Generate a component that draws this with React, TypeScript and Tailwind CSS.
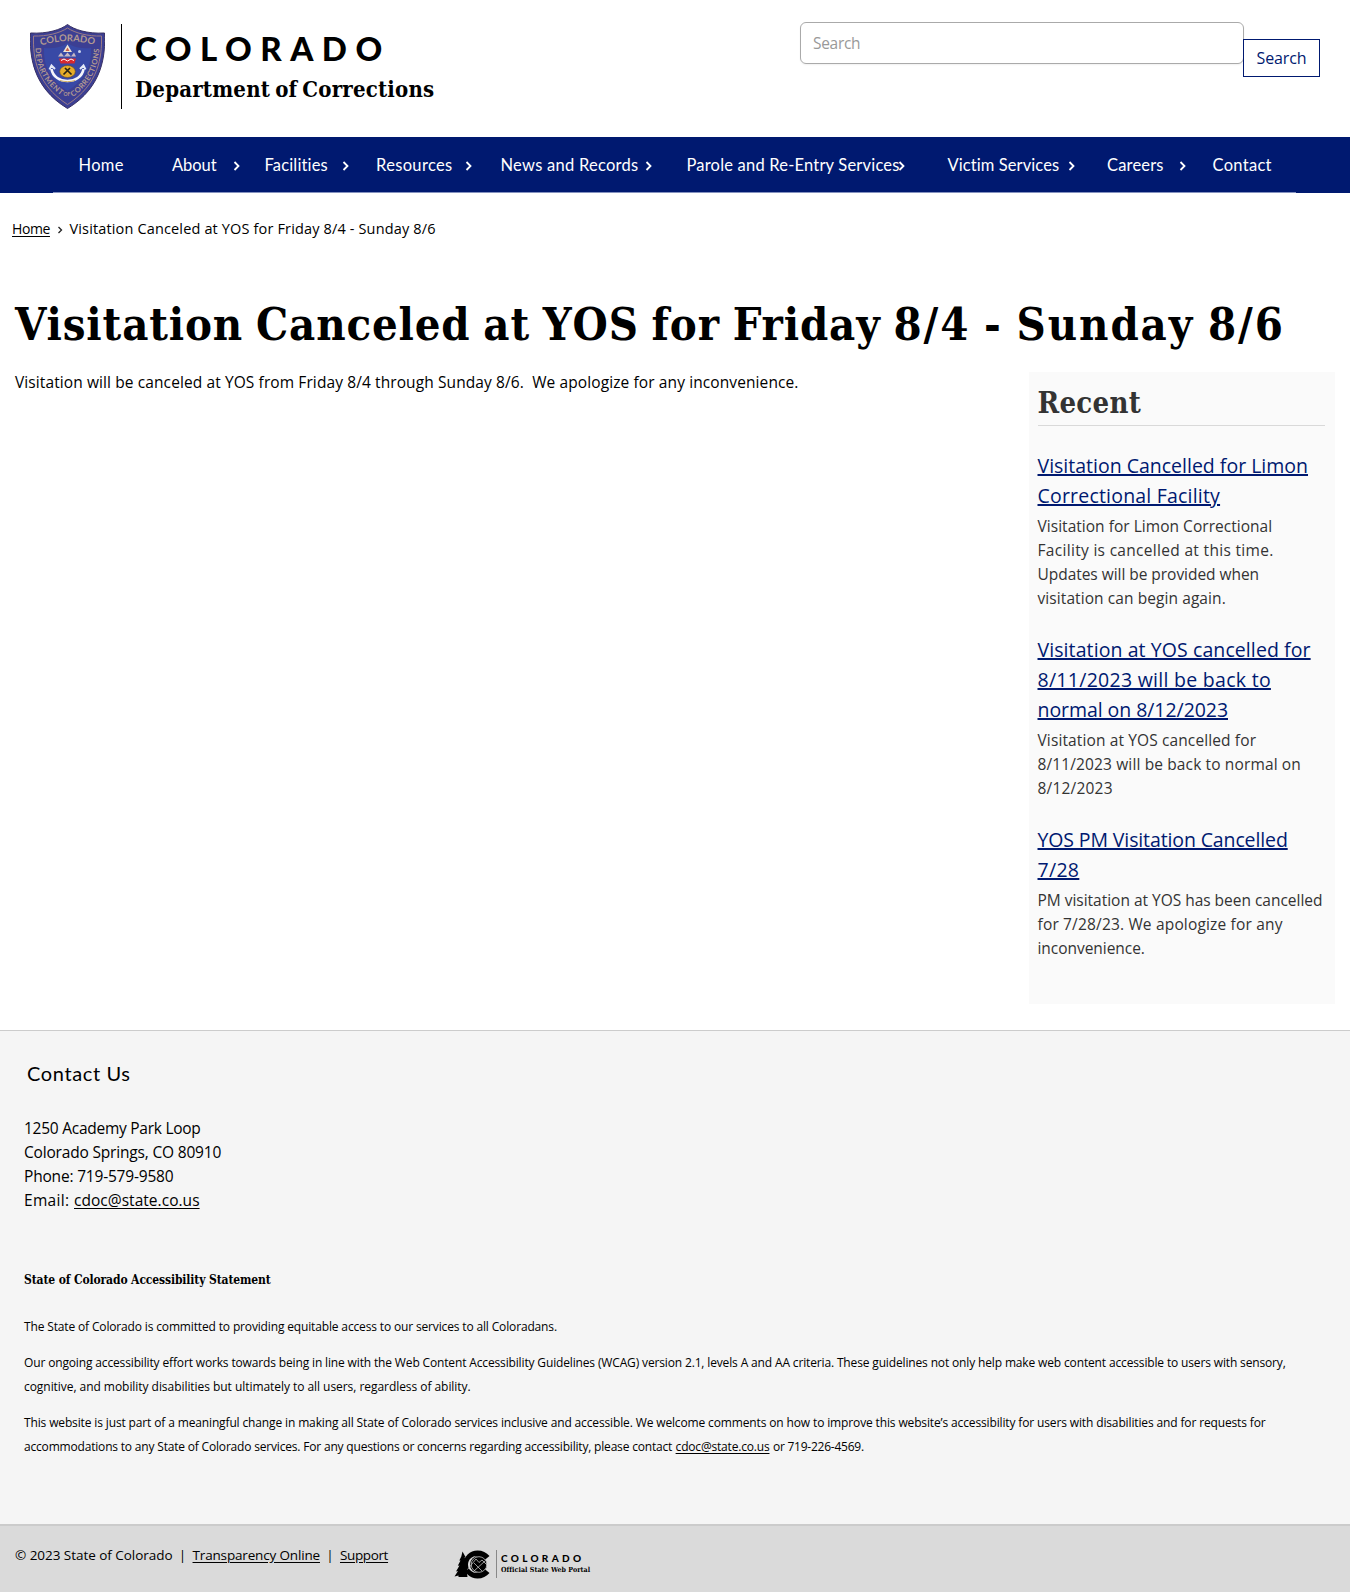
const NAV = [
  { label: "Home", box: "w-[93.5px]", track: "tracking-[0.3px]" },
  { label: "About", box: "w-[92.5px]", track: "tracking-[-0.07px]", arrow: "mr-6" },
  { label: "Facilities", box: "w-[111.5px]", track: "tracking-[0.16px]", arrow: "mr-[26px]" },
  { label: "Resources", box: "w-[124.5px]", track: "tracking-[0.34px]", arrow: "mr-7" },
  { label: "News and Records", box: "w-[186px]", track: "tracking-[0.26px]", arrow: "mr-[34px]" },
  { label: "Parole and Re-Entry Services", box: "w-[261px]", track: "tracking-[0.2px]", arrow: "mr-[42px]" },
  { label: "Victim Services", box: "w-[159.5px]", track: "tracking-[0.09px]", arrow: "mr-[31px]" },
  { label: "Careers", box: "w-[105.5px]", track: "tracking-[0.17px]", arrow: "mr-[26px]" },
  { label: "Contact", box: "w-[80px]", track: "tracking-[0.3px]" },
];

type Line = [text: string, tracking: string];

const RECENT: { title: Line[]; body: Line[] }[] = [
  {
    title: [
      ["Visitation Cancelled for Limon", "tracking-[0px]"],
      ["Correctional Facility", "tracking-[0.2px]"],
    ],
    body: [
      ["Visitation for Limon Correctional", "tracking-[0.03px]"],
      ["Facility is cancelled at this time.", "tracking-[0.31px]"],
      ["Updates will be provided when", "tracking-[-0.04px]"],
      ["visitation can begin again.", "tracking-[0.08px]"],
    ],
  },
  {
    title: [
      ["Visitation at YOS cancelled for", "tracking-[0.09px]"],
      ["8/11/2023 will be back to", "tracking-[0.28px]"],
      ["normal on 8/12/2023", "tracking-[-0.06px]"],
    ],
    body: [
      ["Visitation at YOS cancelled for", "tracking-[0.12px]"],
      ["8/11/2023 will be back to normal on", "tracking-[0.13px]"],
      ["8/12/2023", "tracking-[0.2px]"],
    ],
  },
  {
    title: [
      ["YOS PM Visitation Cancelled", "tracking-[-0.12px]"],
      ["7/28", "tracking-[0.3px]"],
    ],
    body: [
      ["PM visitation at YOS has been cancelled", "tracking-[-0.02px]"],
      ["for 7/28/23. We apologize for any", "tracking-[0.17px]"],
      ["inconvenience.", "tracking-[-0.04px]"],
    ],
  },
];

function Chevron({ className }: { className: string }) {
  return (
    <svg className={`shrink-0 ${className}`} width="8" height="10" viewBox="0 0 8 10" fill="none" stroke="currentColor" strokeWidth="1.8">
      <path d="M1.500 1 5.500 5 1.500 9" />
    </svg>
  );
}

function Lines({ lines }: { lines: Line[] }) {
  return (
    <>
      {lines.map(([text, tracking]) => (
        <span key={text} className={`block whitespace-nowrap ${tracking}`}>
          {text}
        </span>
      ))}
    </>
  );
}

function Badge() {
  return (
    <svg width="75" height="85" viewBox="0 0 75 85" className="shrink-0">
      <defs>
        <path id="arc-top" d="M11 21.500 Q37.500 13 66 21.500" />
        <path id="arc-left" d="M5.500 24 C6 46 15 60 33 73" />
        <path id="arc-right" d="M43 73 C60 60 68.500 46 69.500 22" />
      </defs>
      <path d="M37.500 .5C44 5.500 57 10 74.500 9C75.500 31 73 63 37.500 84.500C2 63-.5 31 .5 9C18 10 31 5.500 37.500.5Z" fill="#3c3f93" stroke="#383063" />
      <path d="M37.500 4C45 9 58 12.500 71.500 12C72 33 69 60 37.500 80.500C6 60 3 33 3.500 12C17 12.500 30 9 37.500 4Z" fill="none" stroke="#9b7c86" strokeWidth="1" />
      <path d="M14 24C27 25 33 22 37.500 19C42 22 48 25 61 24C62 42 54 57 37.500 67C21 57 13 42 14 24Z" fill="#3849a6" />
      <g fill="#b39a91" fontFamily="Lato" fontWeight="700">
        <text fontSize="9.500" textLength="54"><textPath href="#arc-top">COLORADO</textPath></text>
        <text fontSize="7.500" textLength="56"><textPath href="#arc-left">DEPARTMENT</textPath></text>
        <text fontSize="7.500" textLength="57"><textPath href="#arc-right">CORRECTIONS</textPath></text>
        <text fontSize="5" x="33.500" y="72">OF</text>
      </g>
      <path d="M37.500 20.500 42 28H33Z" fill="#efe6d6" />
      <path d="M37.500 23.500 39.500 27H35.500Z" fill="#c9604c" />
      <path d="M28 32.500 31 28.500 34 32.500 37.500 28.500 41 32.500 44 28.500 46 32.500Z" fill="#c6b9c4" />
      <circle cx="49.500" cy="27.500" r="1.500" fill="#c8d4ee" />
      <path d="M29 34.500H46L44.500 39.500H30.500Z" fill="#d7292f" />
      <path d="M31 36.500 34 35 37.500 37 41 35 44 36.500" stroke="#fff" fill="none" />
      <ellipse cx="37.500" cy="47.500" rx="7.800" ry="6" fill="#e6ad2b" stroke="#6b4e1e" strokeWidth=".6" />
      <path d="M33.500 50.500 40 44M41.500 50.500 35 44" stroke="#2a2415" strokeWidth="1.700" />
      <path d="M21.500 45C24 61 51 61 53.500 45" fill="none" stroke="#f5f5fa" strokeWidth="2.600" />
      <path d="M19.500 45.500 21.500 41.500 25 45M50 45 53.500 41.500 55.500 45.500" fill="none" stroke="#e4e9f7" strokeWidth="2" />
      <path d="M30 56.500C35 58 40 58 45 56.500" fill="none" stroke="#c8a13f" strokeWidth=".8" />
    </svg>
  );
}

function PortalMark() {
  return (
    <svg width="38" height="29" viewBox="0 0 38 29" className="shrink-0">
      <path d="M8.500 1.500 11.500 7 10.500 7.500 13 12 11.500 12.500 13.500 27H4.500V25.500L.5 26.500 4 21 2 21.500 5.500 15.500 3.800 15.800 6.500 10.500 5.300 10.500 7.300 6.500Z" />
      <path d="M23.500 .5C28.500 .5 32.500 2.500 35.500 6L30 10.500A8.500 8.500 0 1 0 30 18.500L35.500 23C32.500 26.500 28.500 28.500 23.500 28.500A14 14 0 1 1 23.500 .5Z" />
      <circle cx="24.500" cy="14.500" r="8.500" />
      <circle cx="25" cy="14.500" r="7.800" fill="none" stroke="#dadada" strokeWidth=".7" />
      <path d="M13.500 19.500 22 9 25 12.500 28 10 33 15M20 13 28 21M31 11 20 21" fill="none" stroke="#dadada" strokeWidth=".7" />
    </svg>
  );
}

export default function App() {
  return (
    <div className="flex h-[1592px] w-full flex-col overflow-hidden bg-white font-['Open_Sans',sans-serif] text-black">
      <header className="flex h-[137px] shrink-0 items-start justify-between pl-[30px] pr-[30px]">
        <div className="flex pt-6">
          <Badge />
          <div className="ml-4 h-[85px] w-px bg-black" />
          <div className="ml-[13px] pt-1 whitespace-nowrap">
            <div className="h-[46px] font-['Lato',sans-serif] text-[33px] leading-10 font-black tracking-[8.5px]">COLORADO</div>
            <div className="font-['DejaVu_Serif_Condensed','DejaVu_Serif',serif] text-[22px] leading-[30px] font-bold tracking-[0.2px] [word-spacing:-2px]">Department of Corrections</div>
          </div>
        </div>
        <div className="flex pt-[22px]">
          <div className="h-[42px] w-[444px] rounded-md border border-[#aaa] pt-2 pl-3 text-[15.5px] leading-6 tracking-[-0.3px] text-[#999] shadow-[0_1px_2px_rgba(0,0,0,0.06)]">Search</div>
          <button className="-ml-px mt-[17px] h-[38px] w-[77px] border border-[#001970] bg-white text-base leading-6 tracking-[-0.12px] text-[#001970]">Search</button>
        </div>
      </header>

      <nav className="h-14 shrink-0 bg-[#001970] text-white">
        <ul className="ml-[53px] mr-[54px] flex h-14 items-center border-b border-[#8592bf] pt-[2px] pl-[25.5px] font-['Lato',sans-serif] text-[16.5px]">
          {NAV.map((item) => (
            <li key={item.label} className={`flex shrink-0 items-center ${item.box}`}>
              <span className={`w-0 flex-1 whitespace-nowrap ${item.track}`}>{item.label}</span>
              {item.arrow && <Chevron className={item.arrow} />}
            </li>
          ))}
        </ul>
      </nav>

      <div className="mt-6 flex h-6 shrink-0 items-center pl-3 leading-6 whitespace-nowrap">
        <a className="text-sm leading-6 tracking-[-0.4px] underline underline-offset-2">Home</a>
        <svg className="ml-[7px] mt-[2px]" width="6" height="8" viewBox="0 0 6 8" fill="none" stroke="#222" strokeWidth="1.300"><path d="M1.500 1 4.500 4 1.500 7" /></svg>
        <span className="ml-[6.5px] text-[14.5px] tracking-[0.15px]">Visitation Canceled at YOS for Friday 8/4 - Sunday 8/6</span>
      </div>

      <main className="h-[789px] shrink-0 pt-[55px] pr-[15px] pl-[15px]">
        <h1 className="font-['DejaVu_Serif_Condensed','DejaVu_Serif',serif] text-[45px] leading-[58px] font-bold [word-spacing:-2.1px] whitespace-nowrap">
          <span className="tracking-[0.85px]">Visitation Canceled at YOS for Friday </span>
          <span className="tracking-[1.88px]">8/4 - Sunday 8/6</span>
        </h1>
        <div className="mt-4 flex items-start justify-between">
          <p className="text-[15.5px] leading-6 tracking-[0.1px] whitespace-nowrap">
            Visitation will be canceled at YOS from Friday 8/4 through Sunday 8/6.{"\u00a0 "}We apologize for any inconvenience.
          </p>
          <aside className="mt-[2px] h-[632px] w-[306px] bg-[#fafafa] pr-[10px] pl-[8.5px] pt-[13px] text-[#333]">
            <h2 className="h-[41px] border-b border-[#d9d9d9] font-['DejaVu_Serif_Condensed','DejaVu_Serif',serif] text-[29px] leading-9 font-bold tracking-[0.3px]">Recent</h2>
            <div className="flex flex-col gap-[25px] pt-[25px]">
              {RECENT.map((item) => (
                <article key={item.title[0][0]}>
                  <a className="block text-[19.5px] leading-[30px] text-[#001970] underline underline-offset-1 [text-decoration-thickness:1.500px]">
                    <Lines lines={item.title} />
                  </a>
                  <p className="mt-[3px] text-[15.5px] leading-6">
                    <Lines lines={item.body} />
                  </p>
                </article>
              ))}
            </div>
          </aside>
        </div>
      </main>

      <footer className="flex flex-1 flex-col border-t border-[#ccc] bg-[#f5f5f5]">
        <div className="h-[493px] shrink-0 px-6 pt-[27px]">
          <h3 className="ml-[3px] font-['Lato',sans-serif] text-xl leading-[30px] tracking-[0.62px]">Contact Us</h3>
          <address className="mt-7 text-[15.5px] leading-6 whitespace-nowrap not-italic">
            <div className="tracking-[-0.26px]">1250 Academy Park Loop</div>
            <div className="tracking-[-0.18px]">Colorado Springs, CO 80910</div>
            <div className="tracking-[-0.19px]">Phone: 719-579-9580</div>
            <div className="tracking-[0.03px]">
              <span className="inline-block w-[50px] tracking-[0.3px]">Email: </span>
              <a className="underline underline-offset-2">cdoc@state.co.us</a>
            </div>
          </address>
          <h4 className="mt-14 font-['DejaVu_Serif_Condensed','DejaVu_Serif',serif] text-xs leading-6 font-bold tracking-[-0.12px]">State of Colorado Accessibility Statement</h4>
          <div className="mt-[23px] flex flex-col gap-3 text-xs leading-6 whitespace-nowrap">
            <p className="tracking-[-0.15px]">The State of Colorado is committed to providing equitable access to our services to all Coloradans.</p>
            <p>
              <span className="block tracking-[-0.147px]">Our ongoing accessibility effort works towards being in line with the Web Content Accessibility Guidelines (WCAG) version 2.1, levels A and AA criteria. These guidelines not only help make web content accessible to users with sensory,</span>
              <span className="block tracking-[-0.05px]">cognitive, and mobility disabilities but ultimately to all users, regardless of ability.</span>
            </p>
            <p>
              <span className="block tracking-[-0.137px]">This website is just part of a meaningful change in making all State of Colorado services inclusive and accessible. We welcome comments on how to improve this website’s accessibility for users with disabilities and for requests for</span>
              <span className="block tracking-[-0.185px]">
                accommodations to any State of Colorado services. For any questions or concerns regarding accessibility, please contact{" "}
                <a className="ml-[0.5px] underline underline-offset-2">cdoc@state.co.us</a> <span className="ml-[0.5px] tracking-[-0.24px]">or 719-226-4569.</span>
              </span>
            </p>
          </div>
        </div>
        <div className="flex flex-1 items-start border-t-2 border-[#cbcbcb] bg-[#dadada] pl-[15px]">
          <div className="flex w-[439px] pt-[17px] text-[13.5px] leading-6 whitespace-nowrap">
            <span className="tracking-[-0.04px]">© 2023 State of Colorado</span>
            <span className="w-5 text-center">|</span>
            <a className="tracking-[-0.16px] underline underline-offset-2">Transparency Online</a>
            <span className="w-5 text-center">|</span>
            <a className="tracking-[-0.37px] underline underline-offset-2">Support</a>
          </div>
          <div className="flex pt-[24px]">
            <PortalMark />
            <div className="ml-1 h-7 w-px bg-[#888]" />
            <div className="ml-1 pt-[2px] whitespace-nowrap">
              <div className="font-['Lato',sans-serif] text-[10px] leading-3 font-black tracking-[3.300px]">COLORADO</div>
              <div className="mt-px font-['DejaVu_Serif_Condensed','DejaVu_Serif',serif] text-[7px] leading-[10px] font-bold tracking-[0.07px]">Official State Web Portal</div>
            </div>
          </div>
        </div>
      </footer>
    </div>
  );
}
